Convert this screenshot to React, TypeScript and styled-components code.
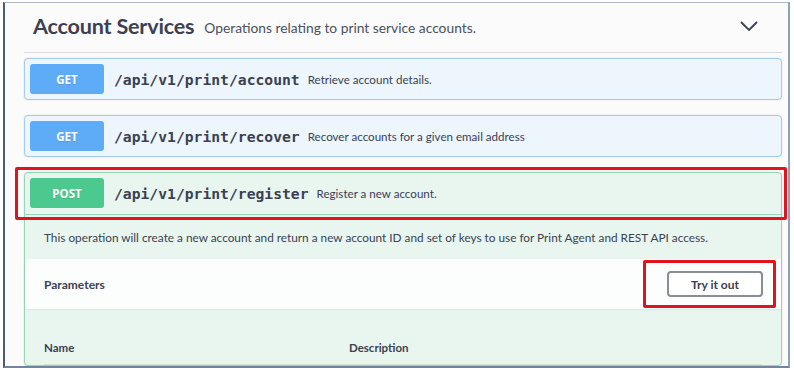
import React from "react";
import styled, { createGlobalStyle } from "styled-components";

const GlobalStyle = createGlobalStyle`
  html, body {
    margin: 0;
    padding: 0;
    background: #ffffff;
  }
  body {
    font-family: Lato, "Open Sans", sans-serif;
    color: #3b4151;
  }
`;

const METHOD_COLORS = {
  get: { badge: "#5eabf7", bg: "#edf5fd", border: "#a4cbee" },
  post: { badge: "#4bc98f", bg: "#e9f6f0", border: "#95d6b9" },
};

type Method = keyof typeof METHOD_COLORS;

const Frame = styled.div`
  box-sizing: border-box;
  margin: 2px 0 0 3px;
  width: 787px;
  height: 366px;
  border-top: 1px solid #a9b8c6;
  border-left: 2px solid #4b5d72;
  border-right: 2px solid #8ea2b6;
  border-bottom: 2px solid #6f86a0;
  background: #fbfbfb;
  padding: 0 6px 0 19px;
  overflow: hidden;
`;

const TagHeader = styled.div`
  display: flex;
  align-items: center;
  height: 48px;
  padding: 0 24px 1px 9px;
  border-bottom: 1px solid #dedbd9;
`;

const TagTitle = styled.h3`
  margin: 0 0 2px;
  font-size: 21.6px;
  font-weight: 700;
  letter-spacing: -0.2px;
  color: #3b4151;
`;

const TagDescription = styled.span`
  flex: 1;
  margin: 0 0 0 10px;
  font-size: 13.8px;
  color: #4a5060;
`;

const Chevron = styled.svg`
  width: 18px;
  height: 10px;
  margin-top: -2px;
`;

const OpList = styled.div`
  padding-top: 5px;
`;

const OpBlock = styled.div<{ $method: Method }>`
  box-sizing: border-box;
  margin-bottom: ${(p) => (p.$method === "get" ? "15px" : "0")};
  border: 1px solid ${(p) => METHOD_COLORS[p.$method].border};
  border-radius: 4px;
  background: ${(p) => METHOD_COLORS[p.$method].bg};
  box-shadow: 0 0 2px rgba(0, 0, 0, 0.12);
`;

const OpHeader = styled.div<{ $open?: boolean }>`
  position: relative;
  display: flex;
  align-items: center;
  padding: ${(p) => (p.$open ? "5px 5px 6px" : "5px")};
  border-bottom: ${(p) => (p.$open ? "1px solid #95d6b9" : "none")};
`;

const Badge = styled.span<{ $method: Method }>`
  display: flex;
  align-items: center;
  justify-content: center;
  width: 74px;
  height: 30px;
  margin-right: 10px;
  border-radius: 3px;
  background: ${(p) => METHOD_COLORS[p.$method].badge};
  color: #ffffff;
  font-family: "Open Sans", sans-serif;
  font-size: 11.5px;
  font-weight: 700;
  text-shadow: 0 1px 0 rgba(0, 0, 0, 0.1);
`;

const Path = styled.span`
  font-family: "DejaVu Sans Mono", "Liberation Mono", monospace;
  font-size: 14.7px;
  font-weight: 700;
  color: #3b4151;
`;

const Summary = styled.span`
  margin-left: 8px;
  font-size: 11.6px;
  color: #3b4151;
`;

const Highlight = styled.div<{ $inset: string }>`
  position: absolute;
  inset: ${(p) => p.$inset};
  border: 3px solid #e0141c;
  border-radius: 2px;
  pointer-events: none;
`;

const OpDescription = styled.div`
  display: flex;
  align-items: center;
  height: 44px;
  padding: 0 19px;
  font-size: 11.8px;
  color: #3b4151;
`;

const SectionHeader = styled.div`
  display: flex;
  align-items: center;
  justify-content: space-between;
  height: 50px;
  padding: 0 18px 0 19px;
  background: rgba(255, 255, 255, 0.82);
  box-shadow: 0 1px 2px rgba(0, 0, 0, 0.06);
`;

const SectionTitle = styled.h4`
  margin: 0;
  font-size: 12px;
  font-weight: 700;
  color: #3b4151;
`;

const ButtonWrap = styled.div`
  position: relative;
`;

const TryButton = styled.button`
  box-sizing: border-box;
  width: 96px;
  height: 26px;
  border: 2px solid #8a8d93;
  border-radius: 4px;
  background: #ffffff;
  font-family: Lato, "Open Sans", sans-serif;
  font-size: 12px;
  font-weight: 700;
  color: #3b4151;
`;

const ParamTable = styled.div`
  display: grid;
  grid-template-columns: 305px 1fr;
  margin: 0 19px;
  padding: 32px 0 10px;
  border-bottom: 1px solid #d6e3dd;
`;

const ColHead = styled.span`
  font-size: 11.5px;
  font-weight: 700;
  color: #3b4151;
`;

const ops: { method: Method; path: string; summary: string }[] = [
  { method: "get", path: "/api/v1/print/account", summary: "Retrieve account details." },
  { method: "get", path: "/api/v1/print/recover", summary: "Recover accounts for a given email address" },
];

export default function App() {
  return (
    <>
      <GlobalStyle />
      <Frame>
        <TagHeader>
          <TagTitle>Account Services</TagTitle>
          <TagDescription>Operations relating to print service accounts.</TagDescription>
          <Chevron viewBox="0 0 18 10" fill="none" stroke="#3b4151" strokeWidth="1.8">
            <path d="M1 1l8 8 8-8" />
          </Chevron>
        </TagHeader>
        <OpList>
          {ops.map((op) => (
            <OpBlock key={op.path} $method={op.method}>
              <OpHeader>
                <Badge $method={op.method}>{op.method.toUpperCase()}</Badge>
                <Path>{op.path}</Path>
                <Summary>{op.summary}</Summary>
              </OpHeader>
            </OpBlock>
          ))}
          <OpBlock $method="post">
            <OpHeader $open>
              <Badge $method="post">POST</Badge>
              <Path>/api/v1/print/register</Path>
              <Summary>Register a new account.</Summary>
              <Highlight $inset="-6px -6px -6px -10px" />
            </OpHeader>
            <OpDescription>
              This operation will create a new account and return a new account ID and set of keys to use for Print
              Agent and REST API access.
            </OpDescription>
            <SectionHeader>
              <SectionTitle>Parameters</SectionTitle>
              <ButtonWrap>
                <TryButton>Try it out</TryButton>
                <Highlight $inset="-11px -13px -11px -24px" />
              </ButtonWrap>
            </SectionHeader>
            <ParamTable>
              <ColHead>Name</ColHead>
              <ColHead>Description</ColHead>
            </ParamTable>
          </OpBlock>
        </OpList>
      </Frame>
    </>
  );
}
